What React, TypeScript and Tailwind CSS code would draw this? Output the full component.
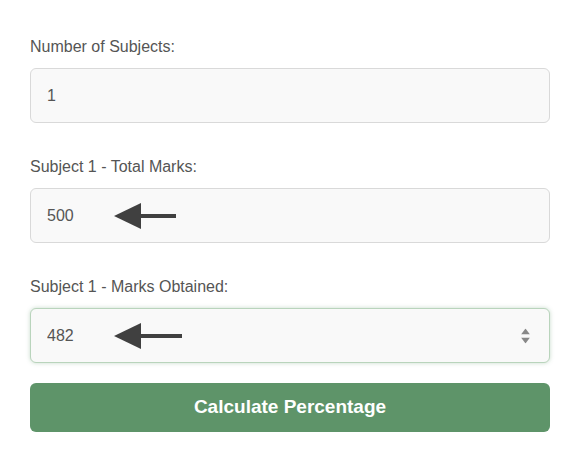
import { useState } from "react"

function Arrow({ length }: { length: number }) {
  return (
    <svg
      width={length}
      height={28}
      viewBox={`0 0 ${length} 28`}
      className="pointer-events-none absolute left-[84px] top-1/2 -translate-y-1/2"
    >
      <polygon points="0,14 27,1 27,27" fill="#404040" />
      <rect x={25} y={12} width={length - 25} height={4} fill="#404040" />
    </svg>
  )
}

const inputBase =
  "block h-[55px] w-full rounded-[6px] border bg-[#f9f9f9] px-[16px] text-[16px] text-[#555] outline-none"

export default function App() {
  const [subjects, setSubjects] = useState("1")
  const [total, setTotal] = useState("500")
  const [obtained, setObtained] = useState("482")

  return (
    <div
      className="min-h-[453px] w-[582px] bg-white pl-[30px] pr-[32px] pt-[37px]"
      style={{ fontFamily: '"Liberation Sans", Arial, sans-serif' }}
    >
      <div className="flex flex-col gap-[20px]">
        <div className="flex flex-col gap-[34px]">
          {/* Number of subjects */}
          <div className="flex flex-col gap-[11px]">
            <label className="text-[16px] leading-[20px] text-[#555]">Number of Subjects:</label>
            <input
              type="text"
              value={subjects}
              onChange={(e) => setSubjects(e.target.value)}
              className={`${inputBase} border-[#d9d9d9]`}
            />
          </div>

          {/* Total marks */}
          <div className="flex flex-col gap-[11px]">
            <label className="text-[16px] leading-[20px] text-[#555]">Subject 1 - Total Marks:</label>
            <div className="relative">
              <input
                type="text"
                value={total}
                onChange={(e) => setTotal(e.target.value)}
                className={`${inputBase} border-[#d9d9d9]`}
              />
              <Arrow length={62} />
            </div>
          </div>

          {/* Marks obtained (focused) */}
          <div className="flex flex-col gap-[11px]">
            <label className="text-[16px] leading-[20px] text-[#555]">Subject 1 - Marks Obtained:</label>
            <div className="relative">
              <input
                type="text"
                value={obtained}
                onChange={(e) => setObtained(e.target.value)}
                className={`${inputBase} border-[#b9d4bc] shadow-[0_0_4px_rgba(94,148,105,0.35)]`}
              />
              <Arrow length={68} />
              <div className="absolute right-[20px] top-1/2 flex -translate-y-1/2 flex-col items-center gap-[3px]">
                <svg width="9" height="6" viewBox="0 0 9 6">
                  <polygon points="4.5,0 9,6 0,6" fill="#888" />
                </svg>
                <svg width="9" height="6" viewBox="0 0 9 6">
                  <polygon points="0,0 9,0 4.5,6" fill="#888" />
                </svg>
              </div>
            </div>
          </div>
        </div>

        {/* Button */}
        <button className="flex h-[49px] w-full items-center justify-center rounded-[6px] bg-[#5e9469] text-[19px] font-bold text-white">
          Calculate Percentage
        </button>
      </div>
    </div>
  )
}
